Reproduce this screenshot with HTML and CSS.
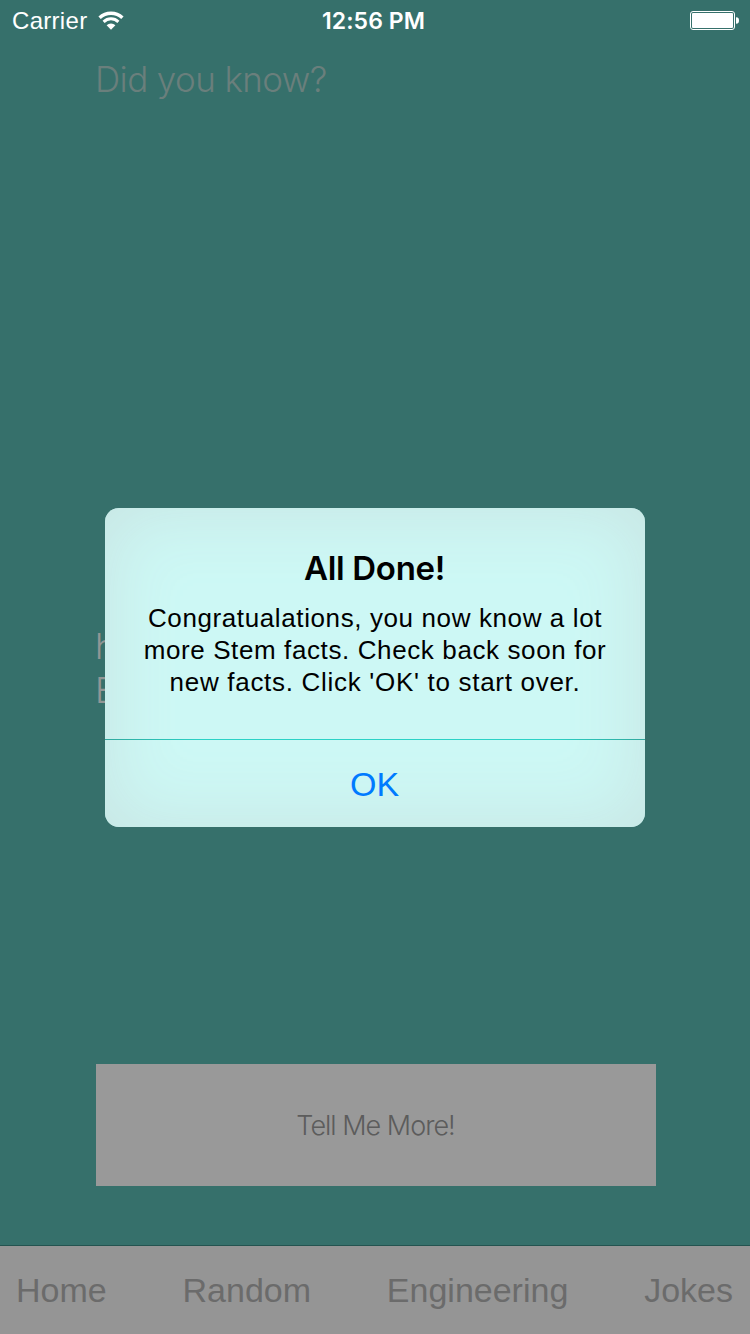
FILE: index.html
```html
<!DOCTYPE html>
<html lang="en">
<head>
<meta charset="utf-8">
<title>Did you know?</title>
<link rel="stylesheet" href="styles.css">
</head>
<body>
<div class="screen">
  <header class="status">
    <div class="status-left">
      <span class="carrier">Carrier</span>
      <svg class="wifi" width="26" height="20" viewBox="0 0 26 20" fill="none" stroke="#fff">
        <path d="M1.6 6.8A16.4 16.4 0 0 1 24.4 6.8" stroke-width="3.4"/>
        <path d="M5.6 10.8A10.8 10.8 0 0 1 20.4 10.8" stroke-width="3"/>
        <path d="M13 18.8L8.6 14.3A6.2 6.2 0 0 1 17.4 14.3Z" fill="#fff" stroke="none"/>
      </svg>
    </div>
    <span class="clock">12:56 PM</span>
    <svg class="battery" width="50" height="20" viewBox="0 0 50 20">
      <rect x=".5" y=".5" width="44" height="18" rx="2.5" fill="none" stroke="#fff"/>
      <rect x="2" y="2" width="41" height="15" rx="1" fill="#fff"/>
      <path d="M46 6.2C48.6 6.4 49 7.7 49 9.5S48.6 12.6 46 12.8Z" fill="#fff"/>
    </svg>
  </header>
  <main class="content">
    <h1 class="heading">Did you know?</h1>
    <p class="fact">h<br>E</p>
    <button class="more"><span class="more-label">Tell Me More!</span></button>
  </main>
  <nav class="toolbar">
    <a class="tab home">Home</a>
    <a class="tab random">Random</a>
    <a class="tab engineering">Engineering</a>
    <a class="tab jokes">Jokes</a>
  </nav>
  <div class="overlay">
    <section class="alert" role="alertdialog">
      <div class="alert-body">
        <h2 class="alert-title">All Done!</h2>
        <p class="alert-message"><span class="line l1">Congratualations, you now know a lot</span><span class="line l2">more Stem facts. Check back soon for</span><span class="line l3">new facts. Click 'OK' to start over.</span></p>
      </div>
      <div class="divider"></div>
      <button class="alert-ok">OK</button>
    </section>
  </div>
</div>
</body>
</html>
```
FILE: styles.css
```css
* { box-sizing: border-box; }
body { margin: 0; font-family: "Liberation Sans", Arial, sans-serif; }
h1, h2, p { margin: 0; font-weight: 400; }
button { border: 0; padding: 0; font-family: inherit; }
.screen {
  position: relative;
  display: flex;
  flex-direction: column;
  width: 750px;
  height: 1334px;
  overflow: hidden;
  background: #36706b;
}
.status {
  display: grid;
  grid-template-columns: 1fr auto 1fr;
  align-items: center;
  height: 40px;
  padding: 0 10px 0 12px;
  color: #fff;
}
.status-left { display: flex; align-items: center; gap: 11px; }
.carrier { font-size: 24px; line-height: 40px; padding-top: 1px; letter-spacing: .3px; }
.wifi { margin-top: 1px; }
.clock { margin-right: 5px; font: 600 23px/40px Inter, sans-serif; letter-spacing: .1px; }
.battery { justify-self: end; margin-top: 1px; }
.content { display: flex; flex-direction: column; flex: 1; padding: 0 94px 0 95px; }
.heading { margin-top: 17px; font: 300 35px/44px Inter, sans-serif; letter-spacing: -.6px; color: #6a7f7c; }
.fact { margin-top: 523px; font: 300 35px/44px Inter, sans-serif; color: #929695; }
.more {
  width: 560px;
  height: 122px;
  margin: 352px 0 0 1px;
  background: #999;
  font: 300 27px/124px Inter, sans-serif;
  letter-spacing: -1px;
  color: #5c5c5c;
}
.more-label { margin-right: 1px; }
.toolbar {
  display: flex;
  justify-content: space-between;
  height: 89px;
  padding: 0 17px 0 16px;
  border-top: 1px solid #245450;
  background: #959595;
  color: #6b6b6b;
}
.tab { font-size: 34px; line-height: 88px; }
.overlay {
  position: absolute;
  inset: 0;
  display: flex;
  align-items: center;
  justify-content: center;
  padding-top: 1px;
}
.alert {
  display: flex;
  flex-direction: column;
  width: 540px;
  height: 319px;
  overflow: hidden;
  border-radius: 14px;
  background: #cdf8f5;
  box-shadow: inset 0 0 70px 4px #c8e5e3;
  text-align: center;
  color: #000;
}
.alert-body { height: 231px; padding-top: 40px; }
.alert-title { font: 600 33px/40px Inter, sans-serif; letter-spacing: -.3px; padding-right: 1px; }
.alert-message { margin-top: 14px; font-size: 26px; line-height: 32px; letter-spacing: .61px; }
.line { display: block; white-space: nowrap; }
.l3 { letter-spacing: .7px; }
.divider { height: 1px; background: linear-gradient(90deg, #30a99f, #2bd2c6 18%, #2bd2c6 82%, #30a99f); }
.alert-ok {
  height: 87px;
  padding: 2px 1px 0 0;
  background: transparent;
  color: #007aff;
  font-size: 34px;
  line-height: 85px;
}
```
